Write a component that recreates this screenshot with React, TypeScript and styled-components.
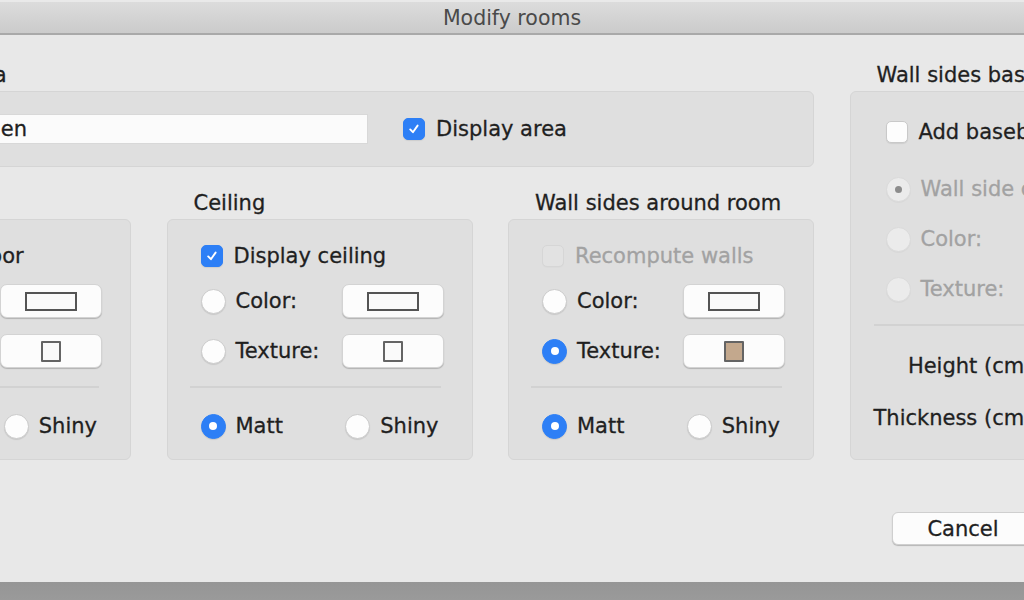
import React from 'react';
import styled, { createGlobalStyle } from 'styled-components';

const BLUE = '#2d7ff6';
const INK = '#1f1f1f';

const GlobalStyle = createGlobalStyle`
  html, body {
    margin: 0;
    padding: 0;
    background: #7b7b7b;
  }
  body {
    font-family: "DejaVu Sans", "Liberation Sans", sans-serif;
  }
`;

const Screen = styled.div`
  width: 1024px;
  height: 600px;
  overflow: hidden;
  display: flex;
  flex-direction: column;
  background: linear-gradient(#858585, #7a7a7a 80%, #9a9a9a);
`;

const Window = styled.div`
  height: 582px;
  flex-shrink: 0;
  background: #e8e8e8;
  display: flex;
  flex-direction: column;
  overflow: hidden;
`;

const TitleBar = styled.div`
  height: 31px;
  flex-shrink: 0;
  border-top: 2px solid #e9e9e9;
  border-bottom: 2px solid #a9a9a9;
  background: linear-gradient(#dcdcdc, #cbcbcb);
  display: flex;
  align-items: center;
  justify-content: center;
  font-size: 20.5px;
  color: #4a4a4a;
`;

/* the dialog is wider than the shot, so its left part is cut off */
const Body = styled.div`
  padding-top: 27px;
  margin-left: -175px;
  width: 1331px;
`;

const Grid = styled.div`
  display: grid;
  grid-template-columns: repeat(4, 306px);
  grid-template-rows: 29px 76px 52px 241px;
  column-gap: 35.5px;
`;

const GroupLabel = styled.div<{ $col: string; $row: string; $indent?: number }>`
  grid-column: ${(p) => p.$col};
  grid-row: ${(p) => p.$row};
  align-self: end;
  margin-bottom: 3px;
  padding-left: ${(p) => p.$indent ?? 27}px;
  line-height: 26px;
  font-size: 21px;
  color: ${INK};
  -webkit-text-stroke: 0.3px ${INK};
  white-space: nowrap;
`;

const Panel = styled.div<{ $col: string; $row: string }>`
  grid-column: ${(p) => p.$col};
  grid-row: ${(p) => p.$row};
  box-sizing: border-box;
  background: #dfdfdf;
  border: 1px solid #d5d5d5;
  border-radius: 6px;
  display: flex;
  flex-direction: column;
  padding: 19px 28px 0 33px;
`;

const AreaPanel = styled(Panel)`
  flex-direction: row;
  align-items: center;
  padding: 0 0 0 34px;
`;

const BaseboardPanel = styled(Panel)`
  padding: 23px 28px 0 35px;
`;

const Row = styled.div<{ $mt?: number }>`
  display: flex;
  align-items: center;
  height: 34px;
  margin-top: ${(p) => p.$mt ?? 0}px;
`;

const Option = styled.label<{ $disabled?: boolean; $push?: boolean }>`
  display: inline-flex;
  align-items: center;
  gap: 10px;
  font-size: 21px;
  white-space: nowrap;
  color: ${(p) => (p.$disabled ? '#a2a2a2' : INK)};
  -webkit-text-stroke: 0.3px ${(p) => (p.$disabled ? '#a2a2a2' : INK)};
  margin-left: ${(p) => (p.$push ? 'auto' : '0')};
  margin-right: ${(p) => (p.$push ? '5px' : '0')};
`;

const RadioDot = styled.span<{ $checked?: boolean; $disabled?: boolean }>`
  width: 25px;
  height: 25px;
  box-sizing: border-box;
  border-radius: 50%;
  flex-shrink: 0;
  display: flex;
  align-items: center;
  justify-content: center;
  background: ${(p) => (p.$checked && !p.$disabled ? BLUE : p.$disabled ? '#ebebeb' : '#fdfdfd')};
  border: 1px solid ${(p) => (p.$checked && !p.$disabled ? BLUE : p.$disabled ? '#dadada' : '#cbcbcb')};
  box-shadow: 0 1px 1px rgba(0, 0, 0, ${(p) => (p.$disabled ? 0.03 : 0.1)});

  &::after {
    content: '';
    display: ${(p) => (p.$checked ? 'block' : 'none')};
    width: ${(p) => (p.$disabled ? 7 : 8)}px;
    height: ${(p) => (p.$disabled ? 7 : 8)}px;
    border-radius: 50%;
    background: ${(p) => (p.$disabled ? '#8c8c8c' : '#ffffff')};
  }
`;

const CheckBox = styled.span<{ $checked?: boolean; $disabled?: boolean }>`
  width: 22px;
  height: 22px;
  box-sizing: border-box;
  border-radius: 5px;
  flex-shrink: 0;
  margin-right: 1px;
  display: flex;
  align-items: center;
  justify-content: center;
  background: ${(p) => (p.$checked ? BLUE : p.$disabled ? '#e2e2e2' : '#fdfdfd')};
  border: 1px solid ${(p) => (p.$checked ? BLUE : p.$disabled ? '#d6d6d6' : '#c9c9c9')};
  box-shadow: 0 1px 1px rgba(0, 0, 0, ${(p) => (p.$disabled ? 0.02 : 0.08)});
`;

const SwatchButton = styled.div<{ $disabled?: boolean }>`
  margin-left: auto;
  width: 102px;
  height: 34px;
  box-sizing: border-box;
  flex-shrink: 0;
  background: ${(p) => (p.$disabled ? '#ededed' : '#fcfcfc')};
  border: 1px solid #d3d3d3;
  border-radius: 7px;
  box-shadow: 0 1px 1px rgba(0, 0, 0, 0.2);
  display: flex;
  align-items: center;
  justify-content: center;
`;

const ColorSwatch = styled.span`
  width: 52px;
  height: 19px;
  box-sizing: border-box;
  border: 2px solid #545454;
  background: #fafafa;
`;

const TextureSwatch = styled.span<{ $fill?: string }>`
  width: 20px;
  height: 21px;
  box-sizing: border-box;
  border: 2px solid #646464;
  border-radius: 1px;
  background: ${(p) => p.$fill ?? '#fafafa'};
`;

const Separator = styled.div<{ $mt?: number; $ml?: number }>`
  height: 2px;
  background: #d2d2d2;
  margin: ${(p) => p.$mt ?? 18}px 3px 0 ${(p) => p.$ml ?? -11}px;
`;

const FieldLabel = styled.span`
  font-size: 21px;
  color: ${INK};
  -webkit-text-stroke: 0.3px ${INK};
  white-space: nowrap;
`;

const TextInput = styled.input`
  margin-left: 12px;
  width: 427px;
  height: 30px;
  box-sizing: border-box;
  border: 1px solid #d8d8d8;
  background: #fbfbfb;
  padding: 0 6px;
  font-family: inherit;
  font-size: 21px;
  color: ${INK};
  -webkit-text-stroke: 0.3px ${INK};
  outline: none;
`;

const AreaCheck = styled(Option)`
  margin-left: 35px;
`;

const SizeGrid = styled.div`
  display: grid;
  grid-template-columns: auto 1fr;
  grid-auto-rows: 34px;
  row-gap: 18px;
  column-gap: 10px;
  align-items: center;
  margin: 23px 0 0 -12px;
`;

const SizeLabel = styled(FieldLabel)`
  justify-self: end;
`;

const Spinner = styled.div`
  height: 30px;
  background: #fbfbfb;
  border: 1px solid #d8d8d8;
`;

const ButtonRow = styled.div`
  display: flex;
  justify-content: flex-end;
  gap: 12px;
  margin-top: 52px;
`;

const DialogButton = styled.button<{ $w: number }>`
  width: ${(p) => p.$w}px;
  height: 33px;
  background: #fcfcfc;
  border: 1px solid #cfcfcf;
  border-radius: 6px;
  box-shadow: 0 1px 1px rgba(0, 0, 0, 0.22);
  font-family: inherit;
  font-size: 21px;
  color: ${INK};
  -webkit-text-stroke: 0.3px ${INK};
  padding: 0;
`;

const Check = () => (
  <svg width="14" height="14" viewBox="0 0 14 14">
    <path d="M3.2 7.4 L5.9 10.2 L10.6 3.6" fill="none" stroke="#fff" strokeWidth="1.9" strokeLinecap="round" strokeLinejoin="round" />
  </svg>
);

type SurfaceProps = {
  col: string;
  top: React.ReactNode;
  colorChecked?: boolean;
  textureChecked?: boolean;
  texture?: string;
};

const SurfacePanel: React.FC<SurfaceProps> = ({ col, top, colorChecked, textureChecked, texture }) => (
  <Panel $col={col} $row="4">
    <Row>{top}</Row>
    <Row $mt={11}>
      <Option>
        <RadioDot $checked={colorChecked} />
        Color:
      </Option>
      <SwatchButton>
        <ColorSwatch />
      </SwatchButton>
    </Row>
    <Row $mt={16}>
      <Option>
        <RadioDot $checked={textureChecked} />
        Texture:
      </Option>
      <SwatchButton>
        <TextureSwatch $fill={texture} />
      </SwatchButton>
    </Row>
    <Separator />
    <Row $mt={21}>
      <Option>
        <RadioDot $checked />
        Matt
      </Option>
      <Option $push>
        <RadioDot />
        Shiny
      </Option>
    </Row>
  </Panel>
);

const App: React.FC = () => {
  return (
    <Screen>
      <GlobalStyle />
      <Window>
        <TitleBar>Modify rooms</TitleBar>
        <Body>
          <Grid>
            <GroupLabel $col="1 / 4" $row="1" $indent={20}>
              Name and area
            </GroupLabel>
            <GroupLabel $col="4" $row="1">
              Wall sides baseboard
            </GroupLabel>

            <AreaPanel $col="1 / 4" $row="2">
              <FieldLabel>Name:</FieldLabel>
              <TextInput readOnly value="Kitchen" />
              <AreaCheck>
                <CheckBox $checked>
                  <Check />
                </CheckBox>
                Display area
              </AreaCheck>
            </AreaPanel>

            <BaseboardPanel $col="4" $row="2 / 5">
              <Row>
                <Option>
                  <CheckBox />
                  Add baseboard
                </Option>
              </Row>
              <Row $mt={23}>
                <Option $disabled>
                  <RadioDot $checked $disabled />
                  Wall side color
                </Option>
              </Row>
              <Row $mt={16}>
                <Option $disabled>
                  <RadioDot $disabled />
                  Color:
                </Option>
                <SwatchButton $disabled>
                  <ColorSwatch />
                </SwatchButton>
              </Row>
              <Row $mt={16}>
                <Option $disabled>
                  <RadioDot $disabled />
                  Texture:
                </Option>
                <SwatchButton $disabled>
                  <TextureSwatch />
                </SwatchButton>
              </Row>
              <Separator $ml={-12} />
              <SizeGrid>
                <SizeLabel>Height (cm):</SizeLabel>
                <Spinner />
                <SizeLabel>Thickness (cm):</SizeLabel>
                <Spinner />
              </SizeGrid>
            </BaseboardPanel>

            <GroupLabel $col="1" $row="3">
              Floor
            </GroupLabel>
            <GroupLabel $col="2" $row="3">
              Ceiling
            </GroupLabel>
            <GroupLabel $col="3" $row="3">
              Wall sides around room
            </GroupLabel>

            <SurfacePanel
              col="1"
              top={
                <Option>
                  <CheckBox $checked>
                    <Check />
                  </CheckBox>
                  Display floor
                </Option>
              }
              textureChecked
            />
            <SurfacePanel
              col="2"
              top={
                <Option>
                  <CheckBox $checked>
                    <Check />
                  </CheckBox>
                  Display ceiling
                </Option>
              }
            />
            <SurfacePanel
              col="3"
              top={
                <Option $disabled>
                  <CheckBox $disabled />
                  Recompute walls
                </Option>
              }
              textureChecked
              texture="#c3a88d"
            />
          </Grid>
          <ButtonRow>
            <DialogButton $w={142}>Cancel</DialogButton>
            <DialogButton $w={110}>OK</DialogButton>
          </ButtonRow>
        </Body>
      </Window>
    </Screen>
  );
};

export default App;
